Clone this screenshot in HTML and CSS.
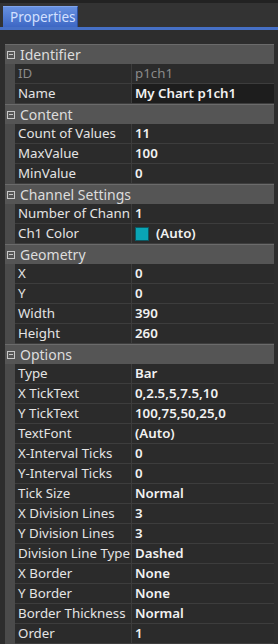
FILE: index.html
```html
<!DOCTYPE html>
<html lang="en">
<head>
  <meta charset="UTF-8">
  <title>Properties</title>
  <link rel="stylesheet" href="styles.css">
</head>
<body>

<div class="props-panel">
  <div class="props-tabbar">
    <div class="props-tab">Properties</div>
  </div>

  <div class="props-grid">
    <div class="props-cat"><span class="props-toggle"></span>Identifier</div>
    <div class="props-row readonly"><div class="props-gutter"></div><div class="props-name">ID</div><div class="props-value">p1ch1</div></div>
    <div class="props-row"><div class="props-gutter"></div><div class="props-name">Name</div><div class="props-value editing">My Chart p1ch1</div></div>

    <div class="props-cat"><span class="props-toggle"></span>Content</div>
    <div class="props-row"><div class="props-gutter"></div><div class="props-name">Count of Values</div><div class="props-value">11</div></div>
    <div class="props-row"><div class="props-gutter"></div><div class="props-name">MaxValue</div><div class="props-value">100</div></div>
    <div class="props-row"><div class="props-gutter"></div><div class="props-name">MinValue</div><div class="props-value">0</div></div>

    <div class="props-cat"><span class="props-toggle"></span>Channel Settings</div>
    <div class="props-row"><div class="props-gutter"></div><div class="props-name">Number of Chann</div><div class="props-value">1</div></div>
    <div class="props-row"><div class="props-gutter"></div><div class="props-name">Ch1 Color</div><div class="props-value"><span class="props-swatch"></span>(Auto)</div></div>

    <div class="props-cat"><span class="props-toggle"></span>Geometry</div>
    <div class="props-row"><div class="props-gutter"></div><div class="props-name">X</div><div class="props-value">0</div></div>
    <div class="props-row"><div class="props-gutter"></div><div class="props-name">Y</div><div class="props-value">0</div></div>
    <div class="props-row"><div class="props-gutter"></div><div class="props-name">Width</div><div class="props-value">390</div></div>
    <div class="props-row"><div class="props-gutter"></div><div class="props-name">Height</div><div class="props-value">260</div></div>

    <div class="props-cat"><span class="props-toggle"></span>Options</div>
    <div class="props-row"><div class="props-gutter"></div><div class="props-name">Type</div><div class="props-value">Bar</div></div>
    <div class="props-row"><div class="props-gutter"></div><div class="props-name">X TickText</div><div class="props-value">0,2.5,5,7.5,10</div></div>
    <div class="props-row"><div class="props-gutter"></div><div class="props-name">Y TickText</div><div class="props-value">100,75,50,25,0</div></div>
    <div class="props-row"><div class="props-gutter"></div><div class="props-name">TextFont</div><div class="props-value">(Auto)</div></div>
    <div class="props-row"><div class="props-gutter"></div><div class="props-name">X-Interval Ticks</div><div class="props-value">0</div></div>
    <div class="props-row"><div class="props-gutter"></div><div class="props-name">Y-Interval Ticks</div><div class="props-value">0</div></div>
    <div class="props-row"><div class="props-gutter"></div><div class="props-name">Tick Size</div><div class="props-value">Normal</div></div>
    <div class="props-row"><div class="props-gutter"></div><div class="props-name">X Division Lines</div><div class="props-value">3</div></div>
    <div class="props-row"><div class="props-gutter"></div><div class="props-name">Y Division Lines</div><div class="props-value">3</div></div>
    <div class="props-row"><div class="props-gutter"></div><div class="props-name">Division Line Type</div><div class="props-value">Dashed</div></div>
    <div class="props-row"><div class="props-gutter"></div><div class="props-name">X Border</div><div class="props-value">None</div></div>
    <div class="props-row"><div class="props-gutter"></div><div class="props-name">Y Border</div><div class="props-value">None</div></div>
    <div class="props-row"><div class="props-gutter"></div><div class="props-name">Border Thickness</div><div class="props-value">Normal</div></div>
    <div class="props-row"><div class="props-gutter"></div><div class="props-name">Order</div><div class="props-value">1</div></div>
  </div>
</div>

</body>
</html>
```

FILE: styles.css
```css
body {
  margin: 0;
  background: #2b2b2b;
  font-family: 'Noto Sans', 'Open Sans', sans-serif;
  font-size: 13px;
}

.props-panel {
  width: 278px;
  height: 644px;
  overflow: hidden;
  background: #2d2d2d;
}

.props-tabbar {
  height: 24px;
  display: flex;
  align-items: flex-end;
  padding-left: 3px;
  background: #333;
  border-top: 3px solid #222;
  border-bottom: 3px solid #4670c6;
}

.props-tab {
  width: 75px;
  height: 21px;
  box-sizing: border-box;
  padding-left: 7px;
  line-height: 21px;
  font-size: 13.5px;
  color: #d3e0ff;
  background: linear-gradient(#6690e0, #3d67c4);
  border-top: 1px solid #7fa4ec;
  border-right: 1px solid #2c4f9e;
}

.props-grid {
  margin: 14px 4px 0 5px;
}

.props-cat {
  display: flex;
  align-items: center;
  height: 20px;
  box-sizing: border-box;
  background: #555;
  border-top: 1px solid #6b6b6b;
  color: #ddd;
  font-size: 14px;
}

.props-toggle {
  width: 8px;
  height: 8px;
  margin: 0 5px 0 2px;
  border: 1px solid #c8c8c8;
  box-sizing: border-box;
  display: flex;
  align-items: center;
  justify-content: center;
}

.props-toggle::after {
  content: '';
  width: 4px;
  height: 1px;
  background: #c8c8c8;
}

.props-row {
  display: grid;
  grid-template-columns: 10px 117px 1fr;
  height: 20px;
  color: #e4e4e4;
}

.props-gutter {
  background: #4b4b4b;
}

.props-name,
.props-value {
  box-sizing: border-box;
  border-bottom: 1px solid #3d3d3d;
  background: #2b2b2b;
  line-height: 19px;
  padding-left: 3px;
  white-space: nowrap;
  overflow: hidden;
  font-size: 13.3px;
}

.props-name {
  border-right: 1px solid #3d3d3d;
}

.props-value {
  font-weight: 600;
  color: #f2f2f2;
  display: flex;
  align-items: center;
}

.props-value.editing {
  background: #1d1d1d;
}

.props-row.readonly .props-name,
.props-row.readonly .props-value {
  color: #8a8a8a;
  font-weight: 400;
}

.props-swatch {
  width: 14px;
  height: 14px;
  box-sizing: border-box;
  margin-right: 7px;
  background: #0aa5b5;
  border: 1px solid #0b5963;
}
```
